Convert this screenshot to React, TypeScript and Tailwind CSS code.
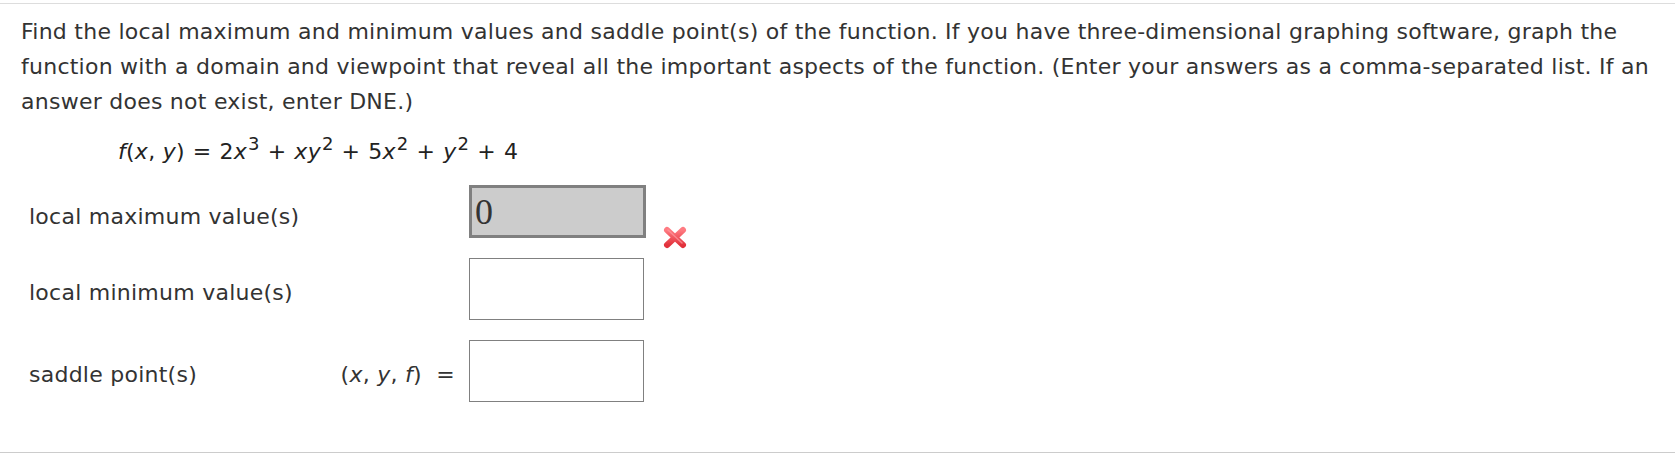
import React from 'react'

const font = { fontFamily: '"DejaVu Sans", Verdana, sans-serif' }

const Sup: React.FC<{ children: React.ReactNode }> = ({ children }) => (
  <sup className="relative -top-[1px] text-[18px] leading-none align-super pl-[1px]">{children}</sup>
)

const Op: React.FC<{ children: React.ReactNode }> = ({ children }) => (
  <span className="px-[8px]">{children}</span>
)

const WrongMark: React.FC = () => (
  <svg width="26" height="25" viewBox="0 0 26 25" className="block">
    <defs>
      <linearGradient id="xg" x1="0" y1="0" x2="0" y2="1">
        <stop offset="0" stopColor="#ff7b82" />
        <stop offset="1" stopColor="#e2323c" />
      </linearGradient>
    </defs>
    <g stroke="url(#xg)" strokeWidth="6" strokeLinecap="round">
      <line x1="5" y1="5" x2="21" y2="20" />
      <line x1="21" y1="5" x2="5" y2="20" />
    </g>
    <g stroke="#ff9aa0" strokeWidth="1.5" strokeLinecap="round" opacity="0.7">
      <line x1="6" y1="5" x2="20" y2="18" />
    </g>
  </svg>
)

const AnswerBox: React.FC<{ value?: string; graded?: boolean }> = ({ value, graded }) =>
  graded ? (
    <div className="w-[177px] h-[53px] border-[3px] border-[#808080] bg-[#cccccc] flex items-center pl-[3px]">
      <span className="text-[36px] leading-none text-[#333] tracking-normal" style={{ fontFamily: '"Liberation Serif", "Times New Roman", serif' }}>
        {value}
      </span>
    </div>
  ) : (
    <div className="w-[175px] h-[62px] border border-[#808080] bg-white" />
  )

export default function App() {
  return (
    <div className="w-[1675px] h-[472px] overflow-hidden bg-white text-[#333] tracking-[0.25px]" style={font}>
      <div className="pt-[3px]">
        <div className="border-t border-[#dddddd] w-[1675px]" />
      </div>
      <div className="pl-[21px] pt-[10px]">
        <p className="text-[22px] leading-[35px] whitespace-nowrap">
          <span className="block">
            Find the local maximum and minimum values and saddle point(s) of the function. If you have three-dimensional
            graphing software, graph the
          </span>
          <span className="block">
            function with a domain and viewpoint that reveal all the important aspects of the function. (Enter your
            answers as a comma-separated list. If an
          </span>
          <span className="block">answer does not exist, enter DNE.)</span>
        </p>
        <div className="pl-[97px] pt-[15px] text-[22px] leading-[35px] text-[#222] whitespace-nowrap">
          <i>f</i>(<i>x</i>, <i>y</i>)<Op>=</Op>2<i>x</i>
          <Sup>3</Sup>
          <Op>+</Op>
          <i>xy</i>
          <Sup>2</Sup>
          <Op>+</Op>5<i>x</i>
          <Sup>2</Sup>
          <Op>+</Op>
          <i>y</i>
          <Sup>2</Sup>
          <Op>+</Op>4
        </div>
      </div>

      <div className="pl-[29px] pt-[16px] grid grid-cols-[300px_140px_auto] items-center gap-y-[20px] text-[22px]">
        <div className="pt-[10px]">local maximum value(s)</div>
        <div />
        <div className="flex items-end gap-[16px]">
          <AnswerBox value="0" graded />
          <div className="-mb-[12px]">
            <WrongMark />
          </div>
        </div>

        <div className="pt-[6px]">local minimum value(s)</div>
        <div />
        <AnswerBox />

        <div className="pt-[7px]">saddle point(s)</div>
        <div className="text-right pr-[14px] pt-[7px]">
          (<i>x</i>, <i>y</i>, <i>f</i>) &nbsp;=
        </div>
        <AnswerBox />
      </div>

      <div className="mt-[50px] border-t border-[#cccccc] w-[1675px]" />
    </div>
  )
}
